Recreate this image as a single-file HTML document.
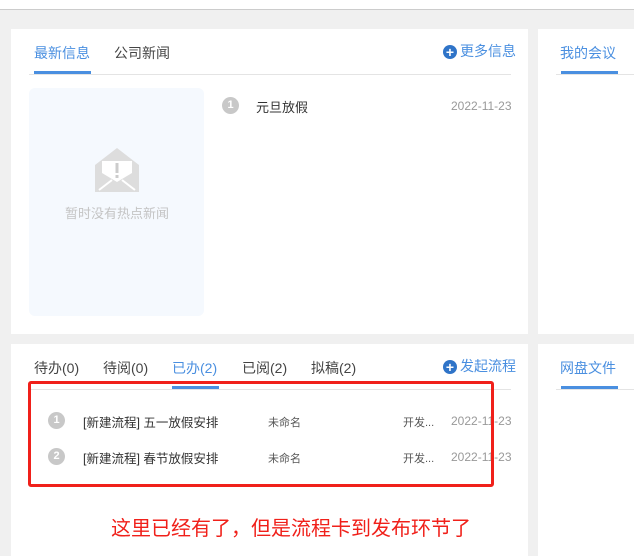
<!DOCTYPE html>
<html><head><meta charset="utf-8"><style>
*{margin:0;padding:0;box-sizing:border-box}
html,body{width:634px;height:556px;overflow:hidden}
body{background:#f0f0f0;font-family:"Liberation Sans","Noto Sans CJK SC",sans-serif;position:relative;font-size:14px;color:#333}
.abs{position:absolute}
.card{position:absolute;background:#fff;overflow:hidden}
.tab{position:absolute;font-size:14px;color:#444;white-space:nowrap}
.on{color:#4a8fe0}
.ul{position:absolute;height:3px;background:#4a8fe0}
.hr{position:absolute;height:1px;background:#e4e4e4}
.num{position:absolute;width:17px;height:17px;border-radius:50%;background:#c8c8c8;color:#fff;font-size:11px;font-weight:bold;text-align:center;line-height:17px}
.date{position:absolute;font-size:12px;color:#999}
.plus{display:inline-block;width:14px;height:14px;border-radius:50%;background:#2f74c8;color:#fff;font-size:14px;line-height:14px;text-align:center;font-weight:bold;vertical-align:-1px;margin-right:3px}
</style></head><body>
<div class="abs" style="left:0;top:0;width:634px;height:10px;background:#fff;border-bottom:1px solid #ccc"></div>
<div class="card" style="left:11px;top:29px;width:517px;height:305px">
 <div class="tab on" style="left:23px;top:14px">最新信息</div>
 <div class="tab" style="left:103px;top:14px">公司新闻</div>
 <div class="tab on" style="left:432px;top:12px"><span class="plus">+</span>更多信息</div>
 <div class="ul" style="left:23px;top:42px;width:57px"></div>
 <div class="hr" style="left:18px;top:45px;width:482px"></div>
 <div class="abs" style="left:18px;top:59px;width:175px;height:228px;background:#f5f9fe;border-radius:6px"></div>
 <svg class="abs" style="left:83px;top:118px" width="46" height="46" viewBox="0 0 46 46"><path d="M1 18 L23 1 L45 18 L45 45 L1 45Z" fill="#ddd"/><path d="M8 14 L38 14 L38 26 L23 35 L8 26Z" fill="#fff"/><rect x="21.5" y="16" width="3" height="10" fill="#ccc"/><rect x="21.5" y="28" width="3" height="3" fill="#ccc"/><path d="M5 43 L18 33 M41 43 L28 33" stroke="#fff" stroke-width="2"/></svg>
 <div class="abs" style="left:54px;top:174px;font-size:13px;color:#c4c4c4">暂时没有热点新闻</div>
 <div class="num" style="left:211px;top:68px">1</div>
 <div class="abs" style="left:245px;top:68px;font-size:13px;color:#333">元旦放假</div>
 <div class="date" style="left:440px;top:70px">2022-11-23</div>
</div>
<div class="card" style="left:538px;top:29px;width:100px;height:305px">
 <div class="tab on" style="left:22px;top:14px">我的会议</div>
 <div class="ul" style="left:23px;top:42px;width:57px"></div>
 <div class="hr" style="left:18px;top:45px;width:82px"></div>
</div>
<div class="card" style="left:11px;top:344px;width:517px;height:220px">
 <div class="tab" style="left:23px;top:14px">待办(0)</div>
 <div class="tab" style="left:92px;top:14px">待阅(0)</div>
 <div class="tab on" style="left:161px;top:14px">已办(2)</div>
 <div class="tab" style="left:231px;top:14px">已阅(2)</div>
 <div class="tab" style="left:300px;top:14px">拟稿(2)</div>
 <div class="tab on" style="left:432px;top:12px"><span class="plus">+</span>发起流程</div>
 <div class="ul" style="left:161px;top:42px;width:47px"></div>
 <div class="hr" style="left:18px;top:45px;width:482px"></div>
 <div class="num" style="left:37px;top:68px">1</div>
 <div class="abs" style="left:72px;top:68px;font-size:12.5px;color:#333">[新建流程] 五一放假安排</div>
 <div class="abs" style="left:257px;top:70px;font-size:11px;color:#555">未命名</div>
 <div class="abs" style="left:392px;top:70px;font-size:11px;color:#555">开发...</div>
 <div class="date" style="left:440px;top:70px">2022-11-23</div>
 <div class="num" style="left:37px;top:104px">2</div>
 <div class="abs" style="left:72px;top:104px;font-size:12.5px;color:#333">[新建流程] 春节放假安排</div>
 <div class="abs" style="left:257px;top:106px;font-size:11px;color:#555">未命名</div>
 <div class="abs" style="left:392px;top:106px;font-size:11px;color:#555">开发...</div>
 <div class="date" style="left:440px;top:106px">2022-11-23</div>
</div>
<div class="card" style="left:538px;top:344px;width:100px;height:220px">
 <div class="tab on" style="left:22px;top:14px">网盘文件</div>
 <div class="ul" style="left:23px;top:42px;width:57px"></div>
 <div class="hr" style="left:18px;top:45px;width:82px"></div>
</div>
<div class="abs" style="left:28px;top:381px;width:466px;height:106px;border:3px solid #f0201a;border-radius:3px"></div>
<div class="abs" style="left:111px;top:512px;font-size:20px;color:#f0201a;white-space:nowrap">这里已经有了，但是流程卡到发布环节了</div>
</body></html>
